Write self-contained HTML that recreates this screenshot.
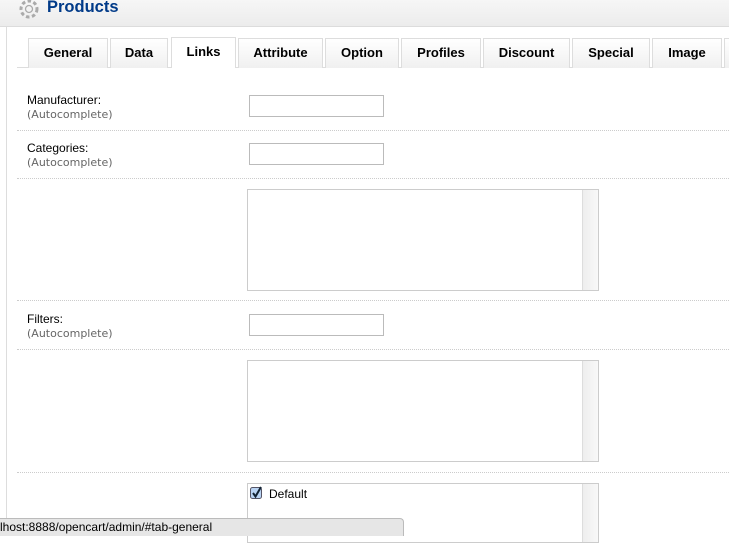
<!DOCTYPE html>
<html><head><style>
*{margin:0;padding:0;box-sizing:border-box}
body{width:729px;height:536px;overflow:hidden;background:#fff;font-family:"Liberation Sans",Arial,sans-serif;position:relative}
.a{position:absolute}
.hd{left:0;top:0;width:729px;height:27px;background:linear-gradient(#f6f6f6,#ececec);border-bottom:1px solid #dcdcdc}
.title{left:47px;top:-2px;font-size:16.5px;font-weight:bold;color:#003a88}
.lb{left:6px;top:27px;width:1px;height:509px;background:#ddd}
.tab{top:38px;height:30px;border:1px solid #ddd;border-bottom:none;background:linear-gradient(#fff,#f0f0f0);font-size:13px;font-weight:bold;color:#000;text-align:center;line-height:28px}
.tab.on{background:#fff;top:37px;height:31px}
.tl{left:17px;top:67px;width:712px;height:1px;background:#ddd}
.lab{left:27px;font-size:12px;color:#000;line-height:14px}
.lab span{color:#666;font-size:11px;font-family:"DejaVu Sans",sans-serif}
.in{left:249px;width:135px;height:22px;border:1px solid #bbb;background:#fff}
.sep{left:17px;width:712px;height:0;border-top:1px dotted #ccc}
.ta{left:247px;width:352px;height:102px;border:1px solid #ccc;background:#fff}
.ta:after{content:"";position:absolute;right:0;top:0;width:15px;height:100%;background:linear-gradient(90deg,#eee,#f8f8f8);border-left:1px solid #ddd}
.sb{left:0;top:518px;width:404px;height:18px;background:#e6e6e6;border:1px solid #bbb;border-left:none;border-bottom:none;border-radius:0 4px 0 0;font-size:12px;line-height:17px;color:#000}
</style></head><body>
<div class="a hd"></div>
<svg class="a" style="left:16px;top:-3px" width="26" height="24" viewBox="0 0 26 24"><g fill="none" stroke="#aaa" stroke-width="1.3"><circle cx="13" cy="12" r="3.5"/><circle cx="13" cy="12" r="8" stroke-dasharray="3.5 2.5" stroke-width="3"/></g></svg>
<div class="a title">Products</div>
<div class="a lb"></div>
<div class="a tl"></div>
<div class="a tab" style="left:28px;width:80px">General</div>
<div class="a tab" style="left:110px;width:58px">Data</div>
<div class="a tab on" style="left:171px;width:65px">Links</div>
<div class="a tab" style="left:238px;width:85px">Attribute</div>
<div class="a tab" style="left:325px;width:74px">Option</div>
<div class="a tab" style="left:401px;width:80px">Profiles</div>
<div class="a tab" style="left:483px;width:87px">Discount</div>
<div class="a tab" style="left:572px;width:78px">Special</div>
<div class="a tab" style="left:652px;width:70px">Image</div>
<div class="a tab" style="left:724px;width:20px"></div>

<div class="a lab" style="top:93px">Manufacturer:<br><span>(Autocomplete)</span></div>
<div class="a in" style="top:95px"></div>
<div class="a sep" style="top:130px"></div>
<div class="a lab" style="top:141px">Categories:<br><span>(Autocomplete)</span></div>
<div class="a in" style="top:143px"></div>
<div class="a sep" style="top:178px"></div>
<div class="a ta" style="top:189px"></div>
<div class="a sep" style="top:300px"></div>
<div class="a lab" style="top:312px">Filters:<br><span>(Autocomplete)</span></div>
<div class="a in" style="top:314px"></div>
<div class="a sep" style="top:349px"></div>
<div class="a ta" style="top:360px"></div>
<div class="a sep" style="top:472px"></div>
<div class="a ta" style="top:483px;height:60px"></div>
<svg class="a" style="left:249px;top:485px" width="16" height="16" viewBox="0 0 16 16"><rect x="1.5" y="2.5" width="11" height="11" rx="2" fill="#b9d3f3" stroke="#556"/><path d="M4 8 L6.5 11.5 L12 2" fill="none" stroke="#123" stroke-width="2"/></svg>
<div class="a" style="left:269px;top:487px;font-size:12px">Default</div>
<div class="a sb">lhost:8888/opencart/admin/#tab-general</div>
</body></html>
